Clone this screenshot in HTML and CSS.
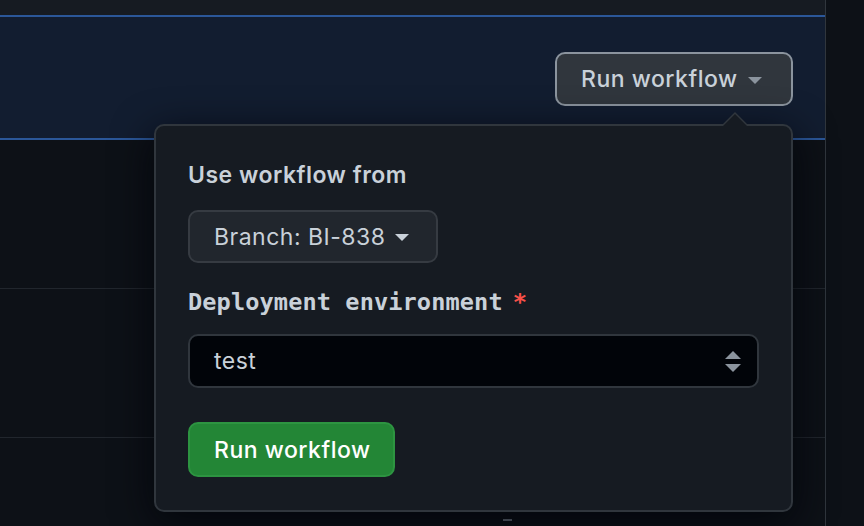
FILE: index.html
```html
<!DOCTYPE html>
<html>
<head>
<meta charset="utf-8">
<link rel="stylesheet" href="styles.css">
</head>
<body>
<div class="page">
  <main class="main">
    <div class="strip"></div>
    <div class="row row-active">
      <div class="wf-wrap">
        <button class="btn btn-top">Run workflow <span class="caret"></span></button>
        <div class="popover">
          <div class="popover-arrow"></div>
          <div class="label">Use workflow from</div>
          <button class="btn btn-branch">Branch: BI-838 <span class="caret caret-sm"></span></button>
          <div class="label mono"><span>Deployment environment</span><span class="req">*</span></div>
          <div class="select">
            <span>test</span>
            <span class="updown"><span class="up"></span><span class="down"></span></span>
          </div>
          <button class="btn btn-green">Run workflow</button>
        </div>
      </div>
    </div>
    <div class="row"></div>
    <div class="row"></div>
    <div class="row row-last"><span class="mini-icon"></span></div>
  </main>
  <aside class="side"></aside>
</div>
</body>
</html>
```
FILE: styles.css
```css
* { box-sizing: border-box; }
html, body { margin: 0; padding: 0; }
body {
  width: 864px;
  height: 526px;
  overflow: hidden;
  background: #0d1117;
  font-family: "Inter", "Noto Sans", sans-serif;
  color: #c9d1d9;
}
.page { display: flex; height: 526px; }
.main {
  width: 826px;
  border-right: 1px solid #30363d;
  display: flex;
  flex-direction: column;
  background: #0d1117;
}
.side { flex: 1; background: #0d1117; }
.strip { height: 15px; background: #161b22; flex: none; }
.row {
  flex: none;
  height: 149px;
  border-bottom: 1px solid #21262d;
}
.row-active {
  height: 125px;
  background: #121d30;
  border-top: 2px solid #2b5799;
  border-bottom: 2px solid #2b5799;
  display: flex;
  justify-content: flex-end;
  align-items: flex-start;
  padding: 35px 32px 0 0;
}
.row-last { height: 100px; border-bottom: none; position: relative; }
.mini-icon {
  position: absolute;
  left: 503px;
  top: 81px;
  width: 9px;
  height: 6px;
  border-top: 2px solid #6e7681;
}
.wf-wrap { position: relative; }
.btn {
  font-family: inherit;
  display: inline-flex;
  align-items: center;
  border-radius: 10px;
  cursor: pointer;
  letter-spacing: 0.5px;
}
.btn-top {
  height: 54px;
  width: 238px;
  padding: 0 0 0 24px;
  background: #30363d;
  border: 2px solid #8b949e;
  color: #c9d1d9;
  font-size: 23px;
  font-weight: 500;
}
.caret {
  display: inline-block;
  width: 0; height: 0;
  border-left: 7px solid transparent;
  border-right: 7px solid transparent;
  border-top: 7px solid #8b949e;
  margin-left: 10px;
  margin-top: 2px;
}
.caret-sm { border-top-color: #c9d1d9; margin-left: 9px; }
.popover {
  position: absolute;
  right: 0;
  top: 72px;
  width: 639px;
  height: 388px;
  background: #161b22;
  border: 2px solid #30363d;
  border-radius: 10px;
  padding: 34px 33px 33px 32px;
  display: flex;
  flex-direction: column;
  align-items: flex-start;
  box-shadow: 0 10px 40px rgba(1, 4, 9, 0.85);
  z-index: 2;
}
.popover-arrow {
  position: absolute;
  right: 42px;
  top: -14px;
  width: 0; height: 0;
  border-left: 14px solid transparent;
  border-right: 14px solid transparent;
  border-bottom: 14px solid #30363d;
}
.popover-arrow::after {
  content: "";
  position: absolute;
  left: -12px;
  top: 2px;
  border-left: 12px solid transparent;
  border-right: 12px solid transparent;
  border-bottom: 12px solid #161b22;
}
.label {
  font-size: 23px;
  font-weight: 600;
  line-height: 30px;
  letter-spacing: 0.5px;
  color: #c9d1d9;
}
.mono {
  font-family: "DejaVu Sans Mono", "Liberation Mono", monospace;
  font-size: 23.6px;
  font-weight: 700;
  letter-spacing: 0.1px;
  margin-top: 24px;
  display: flex;
  align-items: center;
  gap: 11px;
}
.req { color: #f85149; font-family: "DejaVu Sans", sans-serif; }
.btn-branch {
  margin-top: 20px;
  height: 54px;
  width: 250px;
  padding: 0 0 0 24px;
  background: #21262d;
  border: 2px solid #363b42;
  color: #c9d1d9;
  font-size: 23px;
  font-weight: 400;
}
.select {
  margin-top: 17px;
  width: 571px;
  height: 54px;
  flex: none;
  background: #010409;
  border: 2px solid #30363d;
  border-radius: 10px;
  display: flex;
  align-items: center;
  justify-content: space-between;
  padding: 0 16px 0 24px;
  font-size: 23px;
  letter-spacing: 0.5px;
  color: #c9d1d9;
}
.updown { display: flex; flex-direction: column; gap: 5px; }
.up, .down {
  width: 0; height: 0;
  border-left: 8px solid transparent;
  border-right: 8px solid transparent;
}
.up { border-bottom: 8px solid #8b949e; }
.down { border-top: 8px solid #8b949e; }
.btn-green {
  margin-top: 34px;
  height: 55px;
  flex: none;
  width: 207px;
  padding: 0 0 0 24px;
  background: #238636;
  border: 2px solid #2d9441;
  color: #ffffff;
  font-size: 23px;
  font-weight: 500;
}
```
